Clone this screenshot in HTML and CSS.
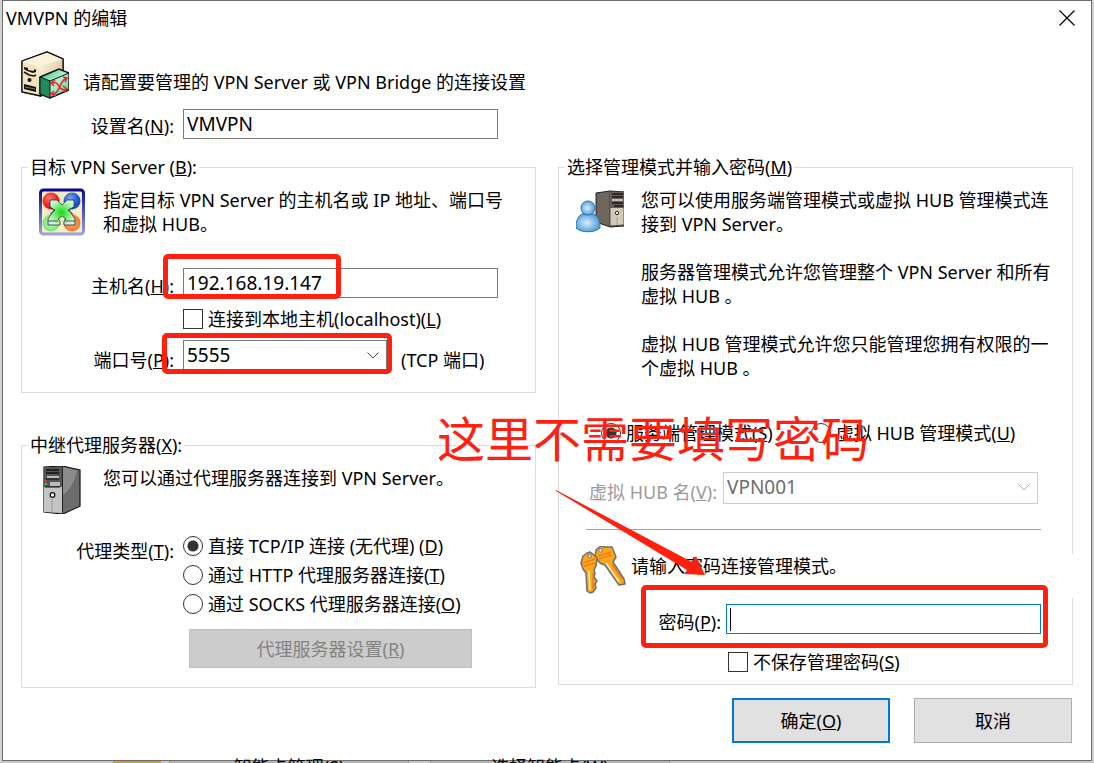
FILE: index.html
```html
<!DOCTYPE html>
<html lang="zh-CN">
<head>
    <meta charset="UTF-8">
    <title>VMVPN 的编辑</title>
    <link rel="stylesheet" href="styles.css">
</head>
<body>
    <form class="window" onsubmit="return false">
        <div class="titlebar">
            <span>VMVPN 的编辑</span>
            <button type="button" class="close" aria-label="关闭">
                <svg width="16" height="16" viewBox="0 0 16 16"><path d="M.5 .5l15 15M15.5 .5l-15 15" stroke="#000" stroke-width="1.2"/></svg>
            </button>
        </div>

        <div class="intro">
            <svg class="icon" viewBox="0 0 48 48">
                <defs>
                    <linearGradient id="beige" x1="0" y1="0" x2="1" y2="1"><stop offset="0" stop-color="#fffaf0"/><stop offset="1" stop-color="#c9ae72"/></linearGradient>
                    <linearGradient id="green" x1="0" y1="0" x2="1" y2="1"><stop offset="0" stop-color="#2fb878"/><stop offset=".5" stop-color="#b4f2d2"/><stop offset="1" stop-color="#3fc488"/></linearGradient>
                </defs>
                <path d="M1 10L26 1l16 7v28L20 45 1 41z" fill="url(#beige)" stroke="#111" stroke-width="1.3"/>
                <path d="M1 10l16 6v29L1 41z" fill="#f3e3bd"/>
                <path d="M17 16l25-8v30l-25 7z" fill="url(#beige)"/>
                <path d="M1 10L26 1l16 7-25 8z" fill="#fdf3dc"/>
                <path d="M1 10L26 1l16 7v28M1 10v31l19 4" fill="none" stroke="#111" stroke-width="1.3"/>
                <path d="M3 16l4 1v2l6 1v-2l2 1v2l-3 1-6-2-3-2z" fill="#111"/>
                <path d="M3 21l5 3 5 1 2-1" fill="none" stroke="#111" stroke-width="1.5"/>
                <circle cx="8.500" cy="29" r="2" fill="#111"/>
                <path d="M3 33l12 3v5L3 38z" fill="#111"/>
                <path d="M4 36l10 2" stroke="#8a7a55" stroke-width="1"/>
                <path d="M19 26l19-8 10 4v17l-19 8-10-4z" fill="url(#green)" stroke="#111" stroke-width="1.4"/>
                <path d="M19 26l10 4v17l-10-4z" fill="#1f8a5c" stroke="#111"/>
                <path d="M29 30l19-8" stroke="#111"/>
                <path d="M31 32c8-3 6 10 15 6M31 43c8 1 7-14 15-16M42 26l4 1-2 4M42 35l4 3-3 3M34 29l-4 3 3 3M33 40l-3 3 5 2" fill="none" stroke="#e22" stroke-width="1.500"/>
            </svg>
            <span>请配置要管理的 VPN Server 或 VPN Bridge 的连接设置</span>
        </div>

        <div class="field name-row">
            <label for="name">设置名(<u>N</u>):</label>
            <input type="text" id="name" value="VMVPN">
        </div>

        <div class="columns">
            <div class="column">
                <fieldset>
                    <legend>目标 VPN Server (<u>B</u>):</legend>
                    <div class="about">
                        <svg class="icon" viewBox="0 0 48 48">
                            <defs>
                                <linearGradient id="frame" x1="0" y1="0" x2="0" y2="1"><stop offset="0" stop-color="#0a0a8c"/><stop offset="1" stop-color="#98a4dc"/></linearGradient>
                                <radialGradient id="r" cx=".4" cy=".35"><stop offset="0" stop-color="#ff7a6a"/><stop offset="1" stop-color="#f01818"/></radialGradient>
                                <radialGradient id="b" cx=".4" cy=".35"><stop offset="0" stop-color="#7aa8f4"/><stop offset="1" stop-color="#1450c8"/></radialGradient>
                                <radialGradient id="g"><stop offset="0" stop-color="#c8ffc0"/><stop offset="1" stop-color="#78e070"/></radialGradient>
                                <radialGradient id="o"><stop offset="0" stop-color="#ffb070"/><stop offset="1" stop-color="#f47830"/></radialGradient>
                                <radialGradient id="x"><stop offset="0" stop-color="#10e010"/><stop offset="1" stop-color="#d0f4d0"/></radialGradient>
                            </defs>
                            <rect x="2.500" y="2" width="43" height="44" rx="3" fill="#f4ecc8" stroke="url(#frame)" stroke-width="3"/>
                            <circle cx="13" cy="13" r="8.500" fill="url(#r)"/>
                            <circle cx="34" cy="13" r="8.500" fill="url(#b)"/>
                            <circle cx="13" cy="35" r="8.500" fill="url(#g)"/>
                            <circle cx="34" cy="35" r="8.500" fill="url(#o)"/>
                            <path d="M12 12h7l5 5 5-5h7v7l-5 3 6 9v6H26v-4l2-2-4-3-4 3 2 2v4H10v-6l6-9-4-3z" fill="url(#x)" stroke="#234" stroke-width=".8"/>
                            <path d="M11 19l6 3-5 4M36 19l-6 3 5 4M10 33h10M27 33h10" fill="none" stroke="#234" stroke-width=".8"/>
                        </svg>
                        <p>指定目标 VPN Server 的主机名或 IP 地址、端口号<br>和虚拟 HUB。</p>
                    </div>
                    <div class="field host-row">
                        <label for="host">主机名(<u>H</u>):</label>
                        <input type="text" id="host" value="192.168.19.147">
                        <span class="mark mark-host"></span>
                    </div>
                    <div class="option local-row">
                        <input type="checkbox" id="local"><label for="local">连接到本地主机(localhost)(<u>L</u>)</label>
                    </div>
                    <div class="field port-row">
                        <label for="port">端口号(<u>P</u>):</label>
                        <div class="select">
                            <select id="port"><option>5555</option></select>
                            <svg width="12" height="7" viewBox="0 0 12 7"><path d="M.5 .5L6 6 11.500 .5"/></svg>
                        </div>
                        <span class="unit">(TCP 端口)</span>
                        <span class="mark mark-port"></span>
                    </div>
                </fieldset>

                <fieldset>
                    <legend>中继代理服务器(<u>X</u>):</legend>
                    <div class="about">
                        <svg class="icon" viewBox="0 0 48 48">
                            <path d="M6 1l18-1 18 4v36l-17 8-19-2z" fill="#777" stroke="#111" stroke-width="1.200"/>
                            <path d="M24 1l17 4v35l-16 7z" fill="#6c6c6c"/>
                            <path d="M25 1l14 4q-4 17-14 24z" fill="#8c8c8c"/>
                            <path d="M6 1h18v46l-18-1z" fill="#c4c4c4"/>
                            <path d="M6 1h18v20H6z" fill="#555"/>
                            <path d="M8 4h13M8 7h13" stroke="#111" stroke-width="1.500"/>
                            <path d="M9 10h12v2H9zM12 16h10v4H12z" fill="#bbb"/>
                            <path d="M8 13h13M7 21h15" stroke="#111"/>
                            <path d="M8 14v2" stroke="#e33" stroke-width="2"/><path d="M8 17v2" stroke="#3c6" stroke-width="2"/>
                            <circle cx="14.500" cy="29" r="2.300" fill="#fff" stroke="#111" stroke-width="1.300"/>
                            <path d="M14 33v13" stroke="#999"/>
                            <path d="M24.500 1v46" stroke="#222"/>
                        </svg>
                        <p>您可以通过代理服务器连接到 VPN Server。</p>
                    </div>
                    <div class="field proxy-row">
                        <span class="caption" id="proxy-label">代理类型(<u>T</u>):</span>
                        <div class="options" role="radiogroup" aria-labelledby="proxy-label">
                            <div class="option"><input type="radio" name="proxy" id="direct" checked><label for="direct">直接 TCP/IP 连接 (无代理) (<u>D</u>)</label></div>
                            <div class="option"><input type="radio" name="proxy" id="http"><label for="http">通过 HTTP 代理服务器连接(<u>T</u>)</label></div>
                            <div class="option"><input type="radio" name="proxy" id="socks"><label for="socks">通过 SOCKS 代理服务器连接(<u>O</u>)</label></div>
                        </div>
                    </div>
                    <button type="button" class="proxy-button" disabled>代理服务器设置(<u>R</u>)</button>
                </fieldset>
            </div>

            <fieldset class="admin">
                <legend>选择管理模式并输入密码(<u>M</u>)</legend>
                <div class="about">
                    <svg class="icon" viewBox="0 0 48 48">
                        <defs>
                            <radialGradient id="user" cx=".45" cy=".5"><stop offset="0" stop-color="#d8eefc"/><stop offset="1" stop-color="#5aa4dc"/></radialGradient>
                        </defs>
                        <path d="M20 5L34 3l14 1v34l-14 1-14-5z" fill="#6e655c" stroke="#222"/>
                        <path d="M34 4h14v33l-14 1z" fill="#d4c8b8" stroke="#333" stroke-width=".8"/>
                        <path d="M34 4h14v16H34z" fill="#665e56"/>
                        <path d="M36 6h11M36 9h11M36 15h11M38 18h9" stroke="#1a1a1a" stroke-width="1.400"/>
                        <path d="M36 11h11v2H36z" fill="#c8bcac"/>
                        <circle cx="41" cy="25" r="1.700" fill="#fff" stroke="#222"/>
                        <path d="M41 29v8" stroke="#a89c8c"/>
                        <path d="M6 26C1 29 0 34 0 40c5 5 19 5 24 0 0-6-1-11-6-14z" fill="url(#user)" stroke="#2f6ea6"/>
                        <circle cx="12" cy="20" r="7" fill="url(#user)" stroke="#2f6ea6"/>
                    </svg>
                    <p>您可以使用服务端管理模式或虚拟 HUB 管理模式连<br>接到 VPN Server。<br><br>服务器管理模式允许您管理整个 VPN Server 和所有<br>虚拟 HUB 。<br><br>虚拟 HUB 管理模式允许您只能管理您拥有权限的一<br>个虚拟 HUB 。</p>
                </div>
                <div class="modes">
                    <div class="option"><input type="radio" name="mode" id="server-mode" checked><label for="server-mode">服务端管理模式(<u>S</u>)</label></div>
                    <div class="option"><input type="radio" name="mode" id="hub-mode"><label for="hub-mode">虚拟 HUB 管理模式(<u>U</u>)</label></div>
                    <span class="note">这里不需要填写密码</span>
                </div>
                <div class="field hub-row">
                    <label for="hub">虚拟 HUB 名(<u>V</u>):</label>
                    <div class="select">
                        <select id="hub" disabled><option>VPN001</option></select>
                        <svg width="12" height="7" viewBox="0 0 12 7"><path d="M.5 .5L6 6 11.500 .5"/></svg>
                    </div>
                </div>
                <hr>
                <div class="key-row">
                    <svg class="icon" viewBox="0 0 48 48">
                        <g stroke="#6e6e6e" stroke-width="1.500" stroke-linejoin="round">
                            <path d="M17 3l4-3 4 1 7 0 2 5 2 5-3 5 11 17 1 5-6 1-14-20-5-2-5-6 1-7z" fill="#fba81c"/>
                            <path d="M3 10l4-3 3-1 3 2 4 4-1 8-2 4 1 3-1 4 3 4-2 3 1 4-3 4-3 1-3-2-1-18-3-4-2-6z" fill="#fba81c"/>
                        </g>
                        <path d="M18 10l13-4M19 13l13-4M3 17l12-4M4 20l11-3" stroke="#f07c10" stroke-width="1.400"/>
                        <path d="M9 25l1 19M26 17l13 19" stroke="#fff0b0" stroke-width="1.500"/>
                        <path d="M13 27v16M32 18l10 15" stroke="#f07c10" stroke-width="1.500"/>
                        <circle cx="9.500" cy="10" r="1.700" fill="#fff" stroke="#666"/>
                        <circle cx="20.500" cy="4.500" r="1.700" fill="#fff" stroke="#666"/>
                    </svg>
                    <span>请输入密码连接管理模式。</span>
                    <svg class="arrow" width="150" height="86" viewBox="0 0 150 86"><path d="M0 0L136 72 140 66 149 85 128 84 131 80 0 1z" fill="#ff2010"/></svg>
                </div>
                <div class="field password-row">
                    <label for="password">密码(<u>P</u>):</label>
                    <input type="password" id="password">
                    <span class="caret"></span>
                    <span class="mark mark-password"></span>
                </div>
                <div class="option save-row">
                    <input type="checkbox" id="nosave"><label for="nosave">不保存管理密码(<u>S</u>)</label>
                </div>
            </fieldset>
        </div>

        <div class="actions">
            <button type="submit" class="primary">确定(<u>O</u>)</button>
            <button type="button">取消</button>
        </div>
    </form>
    <div class="behind">
        <span class="thumb"></span>
        <span class="behind-button">智能卡管理(S)</span>
        <span class="behind-button">选择智能卡(W)</span>
    </div>
</body>
</html>
```
FILE: styles.css
```css
* {
    box-sizing: border-box;
}
body {
    margin: 0;
    background: #d2d2d2;
    color: #000;
    font: 18px/24px "Noto Sans", "Noto Sans CJK SC", sans-serif;
    overflow: hidden;
}
button, input, select {
    font: inherit;
    color: inherit;
    margin: 0;
}
.window {
    margin: 0 2px;
    padding: 0 18px 17px;
    background: #fff;
    border: 1px solid #6e6e6e;
}
.titlebar {
    display: flex;
    justify-content: space-between;
    align-items: center;
    height: 34px;
    margin: 0 -2px 0 -15px;
}
.close {
    display: flex;
    height: 16px;
    padding: 0;
    border: none;
    background: none;
}
.icon {
    flex: none;
    width: 48px;
    height: 48px;
}
.intro {
    display: flex;
    gap: 14px;
    margin-top: 16px;
}
.intro span {
    padding-top: 19px;
}

/* label + control rows */
.field {
    display: flex;
    position: relative;
    gap: 9px;
}
.field > label, .caption {
    flex: none;
    width: 152px;
    padding-top: 3px;
    line-height: 30px;
    text-align: right;
}
input[type="text"], input[type="password"] {
    width: 315px;
    height: 30px;
    padding: 0 3px;
    border: 1px solid #7a7a7a;
    border-radius: 0;
    background: #fff;
    font-size: 19px;
    outline: none;
}
.select {
    position: relative;
    width: 204px;
    height: 32px;
}
.select select {
    width: 100%;
    height: 100%;
    padding: 0 3px 2px;
    border: 1px solid #7a7a7a;
    border-radius: 0;
    background: #fff;
    font-size: 19px;
    appearance: none;
}
.select svg {
    position: absolute;
    right: 8px;
    top: 12px;
    fill: none;
    stroke: #444;
}
.name-row {
    margin: 10px 0 14px 1px;
}
.name-row label {
    padding-top: 2px;
}

.columns {
    display: grid;
    grid-template-columns: 1fr 1fr;
    gap: 22px;
    align-items: start;
}
.column {
    display: grid;
    gap: 40px;
}
fieldset {
    min-width: 0;
    margin: 0;
    padding: 9px 0 0;
    border: 1px solid #dcdcdc;
}
legend {
    margin-left: 6px;
    padding: 0 2px;
}
.about {
    display: flex;
    gap: 17px;
    padding-left: 16px;
}
.admin .about {
    padding-left: 17px;
}
.about p {
    margin: 0;
    white-space: nowrap;
}
.option {
    display: flex;
    align-items: center;
    gap: 5px;
}
.option input {
    appearance: none;
    width: 20px;
    height: 20px;
    border: 1px solid #333;
    background: #fff;
}
.option input[type="radio"] {
    border-radius: 50%;
}
.option input[type="radio"]:checked {
    background: radial-gradient(circle, #333 5px, #fff 6px);
}
.host-row {
    margin-top: 32px;
}
.local-row {
    margin: 6px 0 9px 161px;
}
.port-row {
    padding-bottom: 17px;
}
.port-row > label {
    padding-top: 5px;
}
.unit {
    padding: 8px 0 0 5px;
}
.proxy-row {
    margin-top: 20px;
}
.options {
    display: grid;
    gap: 5px;
}
.proxy-row .caption {
    padding-top: 2px;
}

button {
    height: 45px;
    border: 1px solid #adadad;
    background: #e1e1e1;
}
.proxy-button {
    display: block;
    width: 283px;
    height: 39px;
    margin: 13px 0 19px 167px;
    border-color: #bfbfbf;
    background: #ccc;
    color: #838383;
}

.modes {
    display: flex;
    position: relative;
    gap: 38px;
    margin: 41px 0 27px 42px;
}
.hub-row {
    gap: 6px;
    color: #9a9a9a;
}
.hub-row > label {
    width: 158px;
    padding-top: 5px;
}
.hub-row .select {
    width: 315px;
}
.hub-row select {
    border-color: #ccc;
    color: #6d6d6d;
    opacity: 1;
}
.hub-row svg {
    stroke: #aaa;
}
hr {
    margin: 22px 31px 24px 27px;
    border: none;
    border-top: 1px solid #a0a0a0;
}
.key-row {
    display: flex;
    position: relative;
    gap: 3px;
    height: 44px;
    margin-right: -1px;
    padding-left: 21px;
    background: #fff;
}
.key-row .icon {
    margin-top: -8px;
}
.password-row {
    gap: 5px;
    margin-top: 6px;
}
.password-row > label {
    width: 162px;
}
.password-row input {
    border-color: #0078d7;
}
.caret {
    position: absolute;
    left: 171px;
    top: 4px;
    width: 1px;
    height: 23px;
    background: #000;
}
.save-row {
    margin: 13px 0 10px 169px;
}

.actions {
    display: flex;
    justify-content: flex-end;
    gap: 24px;
    margin: 10px 1px 0 0;
}
.actions button {
    width: 158px;
}
.actions .primary {
    border: 2px solid #0078d7;
}

/* red annotations */
.mark {
    position: absolute;
    border: 5px solid #ff2010;
    border-radius: 5px;
}
.mark-host {
    left: 141px;
    top: -14px;
    width: 178px;
    height: 45px;
}
.mark-port {
    left: 140px;
    top: -7px;
    width: 230px;
    height: 41px;
}
.mark-password {
    left: 82px;
    top: -19px;
    width: 407px;
    height: 63px;
}
.note {
    position: absolute;
    left: -164px;
    top: -6px;
    color: #ff2010;
    font-size: 48px;
    line-height: 48px;
    white-space: nowrap;
}
.arrow {
    position: absolute;
    left: -3px;
    top: -64px;
}

/* window underneath */
.behind {
    display: flex;
    height: 24px;
    padding-left: 113px;
    gap: 8px;
    line-height: 12px;
    background: #c8c8c8;
}
.thumb {
    width: 48px;
    background: #c0a040;
}
.behind-button {
    width: 240px;
    border: 1px solid #999;
    border-top: none;
    background: #b4b4b4;
    text-align: center;
}
.behind-button + .behind-button {
    margin-left: 13px;
}
```
